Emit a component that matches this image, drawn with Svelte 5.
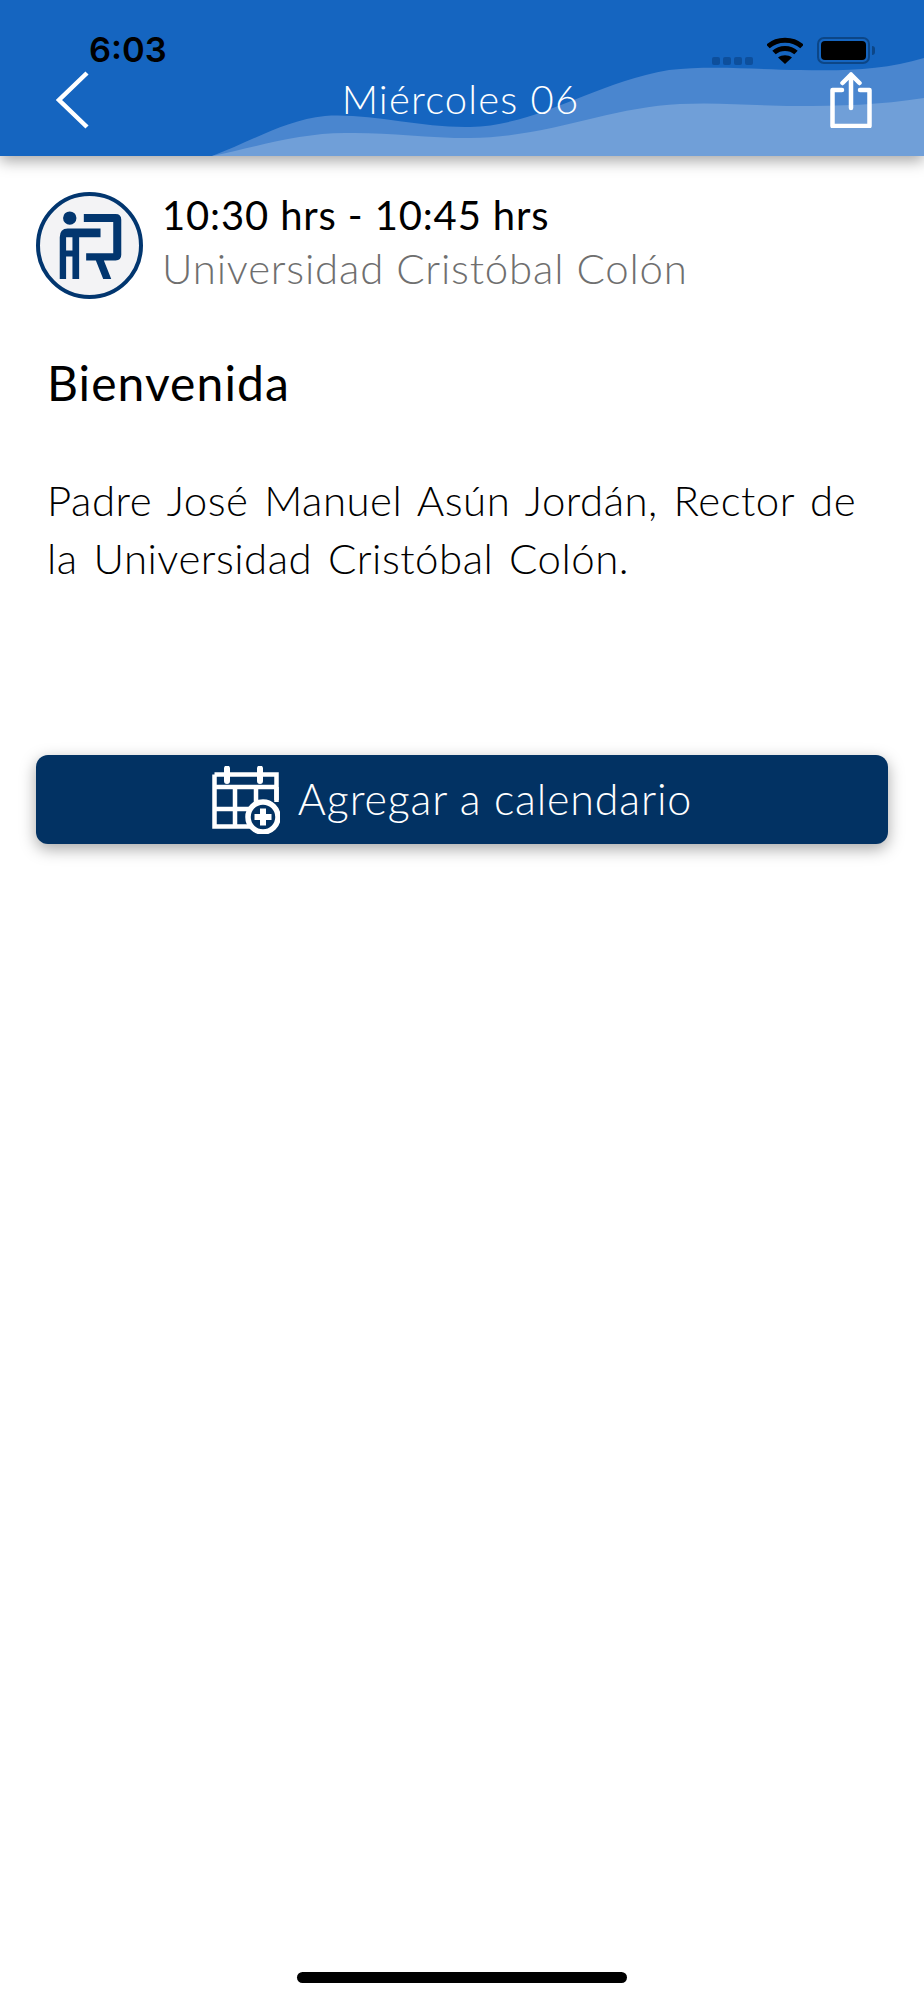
<script>
  const signal = [0, 1, 2, 3];
</script>

<div class="page">
  <header class="header">
    <svg class="waves" viewBox="0 0 924 156" preserveAspectRatio="none" aria-hidden="true">
      <path class="wave-back" d="M212 156C250 142 285 120 325 116C370 113 420 128 470 127C540 125 590 84 669 70C715 65 760 70 800 70C845 71 885 70 924 58V156Z" />
      <path class="wave-front" d="M212 156C255 147 300 133 345 133C385 132 425 138 470 138C550 137 610 107 680 104C720 102 760 106 795 106C840 106 880 105 924 98V156Z" />
    </svg>
    <div class="status">
      <span class="clock">6:03</span>
      <div class="status-icons">
        <div class="signal">
          {#each signal as s (s)}<i></i>{/each}
        </div>
        <svg class="wifi" viewBox="0 0 36 28" aria-hidden="true">
          <path d="M1 9.500C10 1 26 1 35 9.500" />
          <path d="M7 15.500C13 10 23 10 29 15.500" />
          <path d="M18 27L11 20.500C15 17.500 21 17.500 25 20.500Z" class="wifi-fill" />
        </svg>
        <div class="battery"><span></span></div>
        <i class="cap"></i>
      </div>
    </div>
    <nav class="nav">
      <svg class="back" viewBox="0 0 34 58" aria-hidden="true"><path d="M31 2L3 29L31 56" /></svg>
      <h1>Miércoles 06</h1>
      <svg class="share" viewBox="0 0 44 56" aria-hidden="true">
        <path d="M13 18H3.500V54H40.500V18H31" />
        <path d="M22 36V2.500M13.500 11L22 2.500L30.500 11" />
      </svg>
    </nav>
  </header>

  <main class="content">
    <section class="meta">
      <svg class="avatar" viewBox="47 37 320 320" aria-hidden="true">
        <circle cx="207" cy="197" r="154" class="disc" />
        <circle cx="148" cy="115" r="20" class="dot" />
        <path class="logo" d="M118 297V172Q118 146 142 146H240V172H176V297H156V230H137V297ZM137 172V212H156V172Z" />
        <path class="logo" d="M190 103H285Q302 103 302 120V225Q302 242 285 242H250L272 297H248L226 242H197V220H278V127H190Z" />
      </svg>
      <div class="meta-text">
        <div class="time">10:30 hrs - 10:45 hrs</div>
        <div class="place">Universidad Cristóbal Colón</div>
      </div>
    </section>

    <h2>Bienvenida</h2>
    <p>Padre José Manuel Asún Jordán, Rector de<br />la Universidad Cristóbal Colón.</p>

    <button class="cta" type="button">
      <svg class="cal" viewBox="0 0 68 68" aria-hidden="true">
        <path class="cal-line" d="M2.500 8.500H64.500V36M44 60.500H2.500V8.500" />
        <path class="cal-line" d="M2.500 21H64.500M2.500 43H44M23 21V60.500M44 21V44M64.500 21V34" />
        <path class="cal-pin" d="M15 2.500V15M48 2.500V15" />
        <circle class="cal-ring" cx="51" cy="51" r="15" />
        <path class="cal-plus" d="M51 42.500V59.500M42.500 51H59.500" />
      </svg>
      <span>Agregar a calendario</span>
    </button>
  </main>

  <div class="home"></div>
</div>

<style>
  :global(body) {
    margin: 0;
    background: #fff;
  }
  .page {
    width: 924px;
    height: 2000px;
    display: flex;
    flex-direction: column;
    font-family: Lato, "Noto Sans", sans-serif;
    overflow: hidden;
  }
  .header {
    position: relative;
    height: 156px;
    flex: none;
    background: #1565c0;
    box-shadow: 0 5px 14px rgba(0, 0, 0, 0.35);
  }
  .waves {
    position: absolute;
    inset: 0;
    width: 100%;
    height: 100%;
  }
  .wave-back { fill: #4a86cf; }
  .wave-front { fill: #709fd8; }
  .status {
    position: absolute;
    top: 0;
    left: 0;
    right: 0;
    height: 64px;
  }
  .clock {
    position: absolute;
    left: 89px;
    top: 33px;
    font: 600 34.500px/1 Inter, "Liberation Sans", sans-serif;
    color: #000;
  }
  .status-icons {
    position: absolute;
    left: 712px;
    top: 37px;
    display: flex;
    align-items: flex-start;
  }
  .signal {
    display: flex;
    gap: 3px;
    margin-top: 20px;
  }
  .signal i {
    width: 8px;
    height: 8px;
    border-radius: 2px;
    background: #0d4f9c;
  }
  .wifi {
    width: 36px;
    height: 28px;
    margin-left: 14px;
    fill: none;
    stroke: #000;
    stroke-width: 5px;
  }
  .wifi-fill {
    fill: #000;
    stroke: none;
  }
  .battery {
    width: 53px;
    height: 27px;
    box-sizing: border-box;
    margin-left: 14px;
    border: 2px solid #0c4687;
    border-radius: 7px;
    padding: 2px;
  }
  .battery span {
    display: block;
    height: 100%;
    background: #000;
    border-radius: 4px;
  }
  .cap {
    width: 3px;
    height: 9px;
    margin: 9px 0 0 2px;
    border-radius: 0 3px 3px 0;
    background: #0c4687;
  }
  .nav {
    position: relative;
    height: 156px;
    box-sizing: border-box;
    padding: 0 51px 0 56px;
    display: flex;
    align-items: flex-start;
    justify-content: space-between;
  }
  .back {
    width: 34px;
    height: 58px;
    margin-top: 71px;
    fill: none;
    stroke: #fff;
    stroke-width: 4.500px;
  }
  h1 {
    margin: 76px 0 0 2px;
    font-size: 40px;
    line-height: 46px;
    font-weight: 300;
    letter-spacing: 1.17px;
    color: #fff;
  }
  .share {
    width: 44px;
    height: 56px;
    margin-top: 72px;
    fill: none;
    stroke: #fff;
    stroke-width: 4.500px;
    stroke-linejoin: round;
    stroke-linecap: round;
  }
  .content {
    display: flex;
    flex-direction: column;
    padding: 36px 36px 0;
  }
  .meta {
    display: flex;
    align-items: flex-start;
    gap: 19px;
  }
  .avatar {
    width: 107px;
    height: 107px;
    flex: none;
  }
  .disc {
    fill: #f3f3f5;
    stroke: #02366f;
    stroke-width: 12px;
  }
  .dot, .logo { fill: #02366f; }
  .time {
    margin-top: -3px;
    font-size: 40px;
    line-height: 52px;
    letter-spacing: 0.85px;
    color: #000;
  }
  .place {
    font-size: 42px;
    line-height: 54px;
    font-weight: 300;
    letter-spacing: 0.8px;
    color: #6f6f6f;
  }
  h2 {
    margin: 56px 0 0 11px;
    font-size: 48px;
    line-height: 56px;
    font-weight: 400;
    letter-spacing: 1.07px;
    color: #000;
  }
  p {
    margin: 60px 0 0 11px;
    font-size: 42px;
    line-height: 58px;
    font-weight: 300;
    letter-spacing: 0.5px;
    word-spacing: 3.900px;
    color: #000;
  }
  .cta {
    margin-top: 168px;
    height: 89px;
    width: 852px;
    padding: 0 20px 2px 0;
    display: flex;
    align-items: center;
    justify-content: center;
    gap: 18px;
    border: 0;
    border-radius: 12px;
    background: #023263;
    color: #fff;
    font: 300 43px/1 Lato, "Noto Sans", sans-serif;
    letter-spacing: 0.83px;
    box-shadow: 0 5px 16px rgba(0, 0, 0, 0.35);
  }
  .cal {
    width: 68px;
    height: 68px;
    fill: none;
    margin-top: 2px;
  }
  .cal-line {
    stroke: #fff;
    stroke-width: 4.500px;
  }
  .cal-pin {
    stroke: #fff;
    stroke-width: 6px;
    stroke-linecap: round;
  }
  .cal-ring {
    fill: #023263;
    stroke: #fff;
    stroke-width: 5.500px;
  }
  .cal-plus {
    stroke: #fff;
    stroke-width: 6px;
  }
  .home {
    margin: auto auto 17px;
    width: 330px;
    height: 11px;
    border-radius: 6px;
    background: #000;
  }
</style>
